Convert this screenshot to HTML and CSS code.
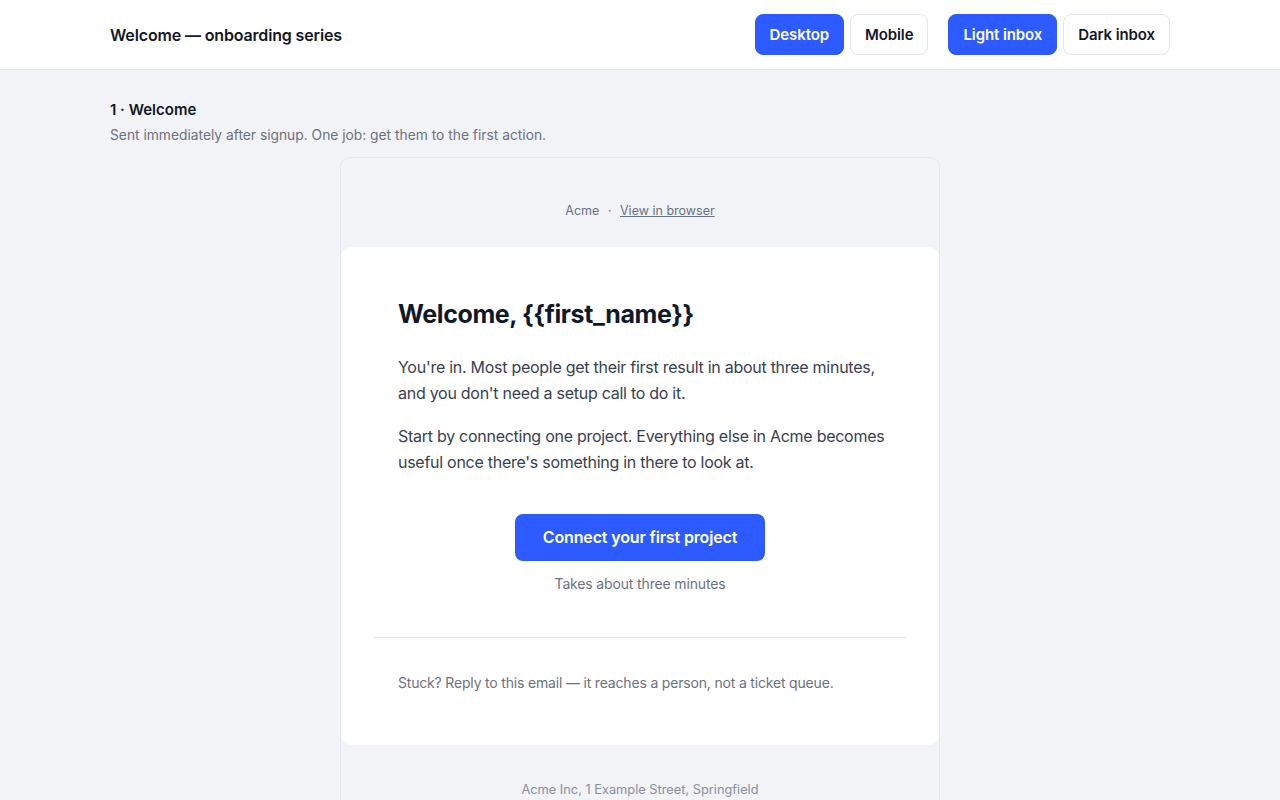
FILE: index.html
```html
<!DOCTYPE html>
<html lang="en">
<head>
<meta charset="utf-8">
<title>Welcome — onboarding series</title>
<link rel="stylesheet" href="styles.css">
</head>
<body>
<header class="topbar">
  <div class="topbar-inner">
    <div class="title">Welcome — onboarding series</div>
    <div class="controls">
      <div class="group">
        <button class="btn btn-active">Desktop</button>
        <button class="btn">Mobile</button>
      </div>
      <div class="group">
        <button class="btn btn-active">Light inbox</button>
        <button class="btn">Dark inbox</button>
      </div>
    </div>
  </div>
</header>
<main class="page">
  <h2 class="step-title">1 · Welcome</h2>
  <p class="step-desc">Sent immediately after signup. One job: get them to the first action.</p>
  <div class="email-frame">
    <div class="preheader">Acme <span class="dot">·</span> <a class="view-link" href="#">View in browser</a></div>
    <div class="card">
      <div class="card-main">
        <h1 class="headline">Welcome, {{first_name}}</h1>
        <p class="para">You're in. Most people get their first result in about three minutes, and you don't need a setup call to do it.</p>
        <p class="para">Start by connecting one project. Everything else in Acme becomes useful once there's something in there to look at.</p>
        <div class="cta-wrap">
          <a class="cta" href="#">Connect your first project</a>
          <div class="cta-note">Takes about three minutes</div>
        </div>
      </div>
      <hr class="divider">
      <div class="card-foot">Stuck? Reply to this email — it reaches a person, not a ticket queue.</div>
    </div>
    <div class="address">Acme Inc, 1 Example Street, Springfield</div>
  </div>
</main>
</body>
</html>
```
FILE: styles.css
```css
* { box-sizing: border-box; }
html, body { margin: 0; padding: 0; }
body {
  font-family: Inter, "Noto Sans", sans-serif;
  background: #f1f3f7;
  color: #111827;
}
.topbar {
  background: #ffffff;
  border-bottom: 1px solid #e3e6eb;
}
.topbar-inner {
  width: 1060px;
  margin: 0 auto;
  height: 69px;
  display: flex;
  align-items: center;
  justify-content: space-between;
}
.title {
  font-size: 16px;
  font-weight: 600;
  letter-spacing: -0.15px;
  color: #111827;
}
.controls { display: flex; gap: 20px; }
.group { display: flex; gap: 6px; }
.btn {
  font-family: inherit;
  font-size: 15px;
  font-weight: 600;
  letter-spacing: -0.1px;
  height: 41px;
  padding: 0 14px;
  border-radius: 8px;
  border: 1px solid #e3e6eb;
  background: #ffffff;
  color: #111827;
  cursor: pointer;
}
.btn-active {
  background: #2d5bff;
  border-color: #2d5bff;
  color: #ffffff;
}
.page {
  width: 1060px;
  margin: 0 auto;
  padding-top: 30px;
}
.step-title {
  margin: 0;
  font-size: 15px;
  line-height: 20px;
  font-weight: 600;
  color: #111827;
}
.step-desc {
  margin: 6px 0 0;
  font-size: 13.8px;
  line-height: 18px;
  color: #6b7280;
}
.email-frame {
  width: 600px;
  margin: 13px auto 0;
  border: 1px solid #e4e7ec;
  border-radius: 10px;
  background: #f1f3f7;
  padding-bottom: 40px;
}
.preheader {
  padding: 44px 0 27px;
  text-align: center;
  font-size: 12.5px;
  line-height: 18px;
  color: #6b7280;
}
.dot { margin: 0 5px; }
.view-link { color: #6b7280; text-decoration: underline; }
.card {
  background: #ffffff;
  border-radius: 10px;
}
.card-main {
  padding: 50px 50px 43px 57px;
}
.headline {
  margin: 0 0 23px;
  font-size: 25px;
  line-height: 34px;
  font-weight: 700;
  color: #111827;
  letter-spacing: -0.4px;
}
.para {
  margin: 0 0 17px;
  font-size: 16px;
  line-height: 26px;
  letter-spacing: -0.27px;
  color: #374151;
}
.cta-wrap {
  padding-top: 22px;
  padding-right: 7px;
  text-align: center;
}
.cta {
  display: inline-block;
  background: #2d5bff;
  color: #ffffff;
  text-decoration: none;
  font-size: 16px;
  font-weight: 600;
  line-height: 19px;
  letter-spacing: -0.15px;
  padding: 14px 28px;
  border-radius: 8px;
}
.cta-note {
  margin-top: 13px;
  font-size: 14px;
  line-height: 20px;
  letter-spacing: -0.15px;
  color: #6b7280;
}
.divider {
  margin: 0 32px;
  border: 0;
  border-top: 1px solid #e5e7eb;
}
.card-foot {
  padding: 35px 57px 52px;
  font-size: 14px;
  line-height: 20px;
  letter-spacing: -0.18px;
  color: #6b7280;
}
.address {
  padding-top: 36px;
  text-align: center;
  font-size: 12.8px;
  line-height: 18px;
  color: #8a909b;
}
```
